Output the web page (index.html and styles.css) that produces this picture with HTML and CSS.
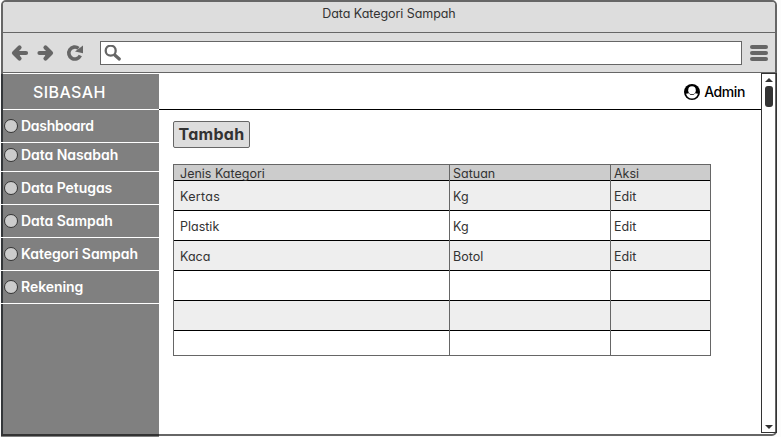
FILE: index.html
```html
<!DOCTYPE html>
<html lang="id">
<head>
<meta charset="utf-8">
<title>Data Kategori Sampah</title>
<link rel="stylesheet" href="styles.css">
</head>
<body>
<div class="window">
  <header class="titlebar">Data Kategori Sampah</header>
  <div class="toolbar">
    <svg class="nav" width="76" height="18" viewBox="0 0 76 18" fill="none" stroke="#666" stroke-linecap="round" stroke-linejoin="round">
      <path d="M8.500 3.500 3 9 8.500 14.500M4.500 9H15M7 7V11" stroke-width="4.200"/>
      <path d="M34.500 3.500 40 9 34.500 14.500M39 9H28.500M36 7V11" stroke-width="4.200"/>
      <path d="M69.300 11.500A6 6 0 1 1 67.500 4.300" stroke-width="3.600" stroke-linecap="butt"/>
      <path d="M72 1.500V9.200L64 7.500Z" fill="#666" stroke="none"/>
    </svg>
    <div class="address">
      <svg width="18" height="18" viewBox="0 0 18 18" fill="none" stroke="#666" stroke-linecap="round">
        <circle cx="6.700" cy="5.700" r="5" stroke-width="2.300"/>
        <path d="M11 10.200 15.300 14" stroke-width="3.200"/>
      </svg>
    </div>
    <div class="menu"><i></i><i></i><i></i></div>
  </div>
  <div class="body">
    <nav class="sidebar">
      <div class="brand">SIBASAH</div>
      <a class="item"><i></i><span class="narrow">Dashboard</span></a>
      <a class="item short"><i></i><span>Data Nasabah</span></a>
      <a class="item"><i></i><span>Data Petugas</span></a>
      <a class="item"><i></i><span>Data Sampah</span></a>
      <a class="item"><i></i><span>Kategori Sampah</span></a>
      <a class="item"><i></i><span>Rekening</span></a>
    </nav>
    <main class="main">
      <div class="userbar">
        <svg width="16" height="16" viewBox="0 0 16 16">
          <circle cx="8" cy="8" r="8"/>
          <path d="M2 9.800Q3.500 9.200 4.800 9.200Q8 13 11.200 9.200Q12.500 9.200 14 9.800Q12.500 14.500 8 14.600Q3.500 14.500 2 9.800Z" fill="#fff"/>
          <ellipse cx="8" cy="6.200" rx="3.800" ry="4" fill="#fff"/>
        </svg>
        <span>Admin</span>
      </div>
      <div class="content">
        <button class="add">Tambah</button>
        <div class="table">
          <div class="row head"><div>Jenis Kategori</div><div>Satuan</div><div>Aksi</div></div>
          <div class="row alt"><div class="wide">Kertas</div><div>Kg</div><div>Edit</div></div>
          <div class="row"><div>Plastik</div><div>Kg</div><div>Edit</div></div>
          <div class="row alt"><div>Kaca</div><div>Botol</div><div>Edit</div></div>
          <div class="row"><div></div><div></div><div></div></div>
          <div class="row alt"><div></div><div></div><div></div></div>
          <div class="row last"><div></div><div></div><div></div></div>
        </div>
      </div>
    </main>
    <div class="scroll">
      <svg width="8" height="4" viewBox="0 0 8 4"><path d="M4 0 8 4H0Z" fill="#333"/></svg>
      <i class="thumb"></i>
      <svg class="down" width="8" height="4" viewBox="0 0 8 4"><path d="M0 0H8L4 4Z" fill="#333"/></svg>
    </div>
  </div>
</div>
</body>
</html>
```

FILE: styles.css
```css
* { box-sizing: border-box; }
body {
  margin: 0;
  height: 437px;
  overflow: hidden;
  background: #fcfcfc;
  color: #333;
  font: 13px/16px Inter, "Liberation Sans", sans-serif;
  font-feature-settings: "cv11";
}
.window {
  width: 776px;
  height: 436px;
  margin-left: 1px;
  border: 2px solid #666;
  border-radius: 5px;
  background: #fff;
}
.titlebar {
  height: 31px;
  padding-top: 4px;
  border-bottom: 1px solid #666;
  border-radius: 3px 3px 0 0;
  background: #ddd;
  text-align: center;
  font-size: 12.5px;
  letter-spacing: -0.06px;
  line-height: 16px;
}
.toolbar {
  display: flex;
  align-items: center;
  height: 40px;
  padding: 0 7px 0 8px;
  border-bottom: 1px solid #666;
  background: #ddd;
}
.nav { flex: none; margin-right: 13px; }
.address {
  flex: none;
  width: 642px;
  height: 24px;
  padding: 3px;
  border: 1px solid #666;
  background: #fff;
}
.address svg { display: block; }
.menu { display: flex; flex-direction: column; gap: 2px; margin-left: 8px; }
.menu i { width: 18px; height: 4px; border-radius: 2px; background: #666; }
.body { display: flex; height: 361px; }
.sidebar {
  flex: none;
  width: 158px;
  height: 363px;
  margin: 1px 0 0 -2px;
  background: linear-gradient(#333, #333) 0 360px / 158px 2px no-repeat,
    linear-gradient(#333639, #333639) 0 0 / 2px 362px no-repeat, #808080;
  color: #fff;
  font-size: 14px;
  font-weight: 600;
  letter-spacing: -0.05px;
}
.brand {
  height: 36px;
  margin-left: 2px;
  padding: 9px 0 0 30px;
  border-bottom: 1px solid #fff;
  font-size: 16px;
  font-weight: 500;
  letter-spacing: 0.4px;
  line-height: 18px;
}
.item {
  display: flex;
  align-items: center;
  height: 33px;
  padding-left: 3px;
  border-bottom: 1px solid #fff;
  white-space: nowrap;
}
.short { height: 29px; padding-bottom: 4px; }
.narrow { letter-spacing: -0.25px; }
.item i {
  width: 14px;
  height: 14px;
  margin-right: 3px;
  border: 1px solid #333;
  border-radius: 50%;
  background: #ccc;
}
.main { flex: none; width: 602px; }
.userbar {
  display: flex;
  align-items: center;
  justify-content: flex-end;
  gap: 4px;
  height: 37px;
  padding: 1px 16px 0 0;
  border-bottom: 1px solid #000;
  color: #000;
  font-size: 14px;
  font-weight: 500;
  letter-spacing: -0.4px;
}
.content { padding: 11px 0 0 14px; }
.add {
  display: block;
  width: 77px;
  height: 27px;
  padding: 0 0 2px;
  border: 1px solid #666;
  border-radius: 2px;
  background: #ddd;
  color: #333;
  font: 700 16px/20px Inter, sans-serif;
  font-feature-settings: "cv11";
  letter-spacing: 0.3px;
}
.table {
  width: 538px;
  height: 192px;
  margin-top: 16px;
  border: 1px solid #666;
  font-size: 12.5px;
}
.row {
  display: grid;
  grid-template-columns: 276px 161px 99px;
  height: 30px;
  border-bottom: 1px solid #000;
  line-height: 32px;
}
.row div { padding-left: 3px; border-right: 1px solid #666; margin-bottom: -1px; }
.row div:first-child { padding-left: 6px; }
.row div:last-child { border-right: 0; }
.row .wide { letter-spacing: 0.3px; }
.head { height: 16px; background: #ccc; line-height: 17px; }
.alt { background: #eee; }
.last { height: 24px; border-bottom: 0; }
.last div { margin-bottom: 0; }
.scroll {
  display: flex;
  flex-direction: column;
  align-items: center;
  width: 16px;
  height: 360px;
  flex: none;
  padding-top: 4px;
  border: 1px solid #333;
}
.thumb { width: 8px; height: 21px; margin-top: 4px; border-radius: 3px; background: #333; }
.down { margin: auto 0 3px; }
```
